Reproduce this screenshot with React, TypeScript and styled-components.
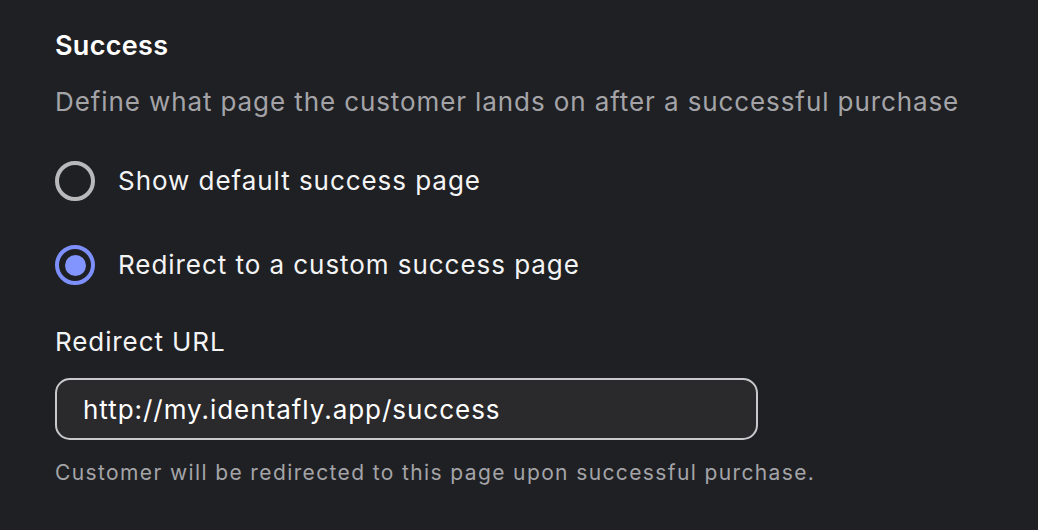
import React, { useState } from "react";
import styled, { createGlobalStyle } from "styled-components";

const Global = createGlobalStyle`
  html, body { margin: 0; padding: 0; background: #1f2023; }
  body { font-family: Inter, "Noto Sans", sans-serif; -webkit-font-smoothing: antialiased; }
`;

const Panel = styled.section`
  box-sizing: border-box;
  width: 1038px;
  height: 530px;
  padding: 30px 55px 0;
  display: flex;
  flex-direction: column;
  background: #1f2023;
  color: #f4f4f5;
`;

const Title = styled.h2`
  margin: 0;
  font-size: 27px;
  font-weight: 600;
  line-height: 32px;
  letter-spacing: 0.3px;
  color: #ffffff;
`;

const Description = styled.p`
  margin: 23px 0 0;
  font-size: 26px;
  line-height: 34px;
  letter-spacing: 0.9px;
  color: #a4a4a8;
`;

const Options = styled.div`
  display: flex;
  flex-direction: column;
  gap: 44px;
  margin-top: 42px;
`;

const Option = styled.label`
  display: flex;
  align-items: center;
  gap: 23px;
  cursor: pointer;
  font-size: 26px;
  line-height: 40px;
  letter-spacing: 0.95px;
  color: #f4f4f5;
`;

const Ring = styled.span<{ $checked: boolean }>`
  box-sizing: border-box;
  width: 40px;
  height: 40px;
  border-radius: 50%;
  border: 4px solid ${(p) => (p.$checked ? "#7d8ffb" : "#b9b9bc")};
  display: flex;
  align-items: center;
  justify-content: center;
  flex-shrink: 0;
`;

const Dot = styled.span`
  width: 21px;
  height: 21px;
  border-radius: 50%;
  background: #8294fd;
`;

const FieldLabel = styled.div`
  margin-top: 40px;
  font-size: 26px;
  line-height: 34px;
  letter-spacing: 0.9px;
  color: #f4f4f5;
`;

const Input = styled.input`
  box-sizing: border-box;
  margin-top: 19px;
  width: 703px;
  height: 62px;
  padding: 0 26px;
  border: 2px solid #c9c9cc;
  border-radius: 15px;
  background: #2a2a2c;
  color: #ffffff;
  font-family: Inter, "Noto Sans", sans-serif;
  font-size: 26px;
  letter-spacing: 0.97px;
  outline: none;
`;

const Helper = styled.p`
  margin: 19px 0 0;
  font-size: 21px;
  line-height: 28px;
  letter-spacing: 1.38px;
  color: #a4a4a8;
`;

export default function App() {
  const [choice, setChoice] = useState<"default" | "custom">("custom");
  const options: { id: "default" | "custom"; label: string }[] = [
    { id: "default", label: "Show default success page" },
    { id: "custom", label: "Redirect to a custom success page" },
  ];
  return (
    <>
      <Global />
      <Panel>
        <Title>Success</Title>
        <Description>Define what page the customer lands on after a successful purchase</Description>
        <Options>
          {options.map((o) => (
            <Option key={o.id} onClick={() => setChoice(o.id)}>
              <Ring $checked={choice === o.id}>{choice === o.id && <Dot />}</Ring>
              {o.label}
            </Option>
          ))}
        </Options>
        <FieldLabel>Redirect URL</FieldLabel>
        <Input defaultValue="http://my.identafly.app/success" />
        <Helper>Customer will be redirected to this page upon successful purchase.</Helper>
      </Panel>
    </>
  );
}
